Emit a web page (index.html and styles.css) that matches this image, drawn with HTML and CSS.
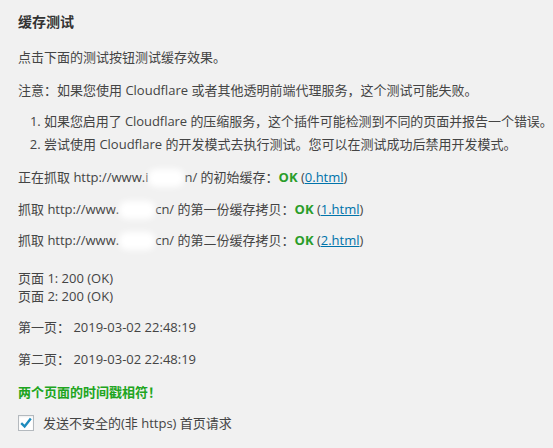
FILE: index.html
```html
<!DOCTYPE html>
<html lang="zh-CN">
<head>
<meta charset="utf-8">
<link rel="stylesheet" href="styles.css">
</head>
<body>
<div class="wrap">
  <h3 class="title">缓存测试</h3>
  <p class="l p1">点击下面的测试按钮测试缓存效果。</p>
  <p class="l p2">注意：如果您使用 Cloudflare 或者其他透明前端代理服务，这个测试可能失败。</p>
  <ol class="notes">
    <li class="l n1">如果您启用了 Cloudflare 的压缩服务，这个插件可能检测到不同的页面并报告一个错误。</li>
    <li class="l n2">尝试使用 Cloudflare 的开发模式去执行测试。您可以在测试成功后禁用开发模式。</li>
  </ol>
  <p class="l f1">正在抓取 http://www.i<span class="mask m1"></span>n/ 的初始缓存：<b class="ok">OK</b> (<a href="#">0.html</a>)</p>
  <p class="l f2">抓取 http://www.<span class="mask m2"></span>cn/ 的第一份缓存拷贝：<b class="ok">OK</b> (<a href="#">1.html</a>)</p>
  <p class="l f3">抓取 http://www.<span class="mask m2"></span>cn/ 的第二份缓存拷贝：<b class="ok">OK</b> (<a href="#">2.html</a>)</p>
  <p class="pages">页面 1: 200 (OK)<br>页面 2: 200 (OK)</p>
  <p class="l t1">第一页： <span class="ts">2019-03-02 22:48:19</span></p>
  <p class="l t2">第二页： <span class="ts">2019-03-02 22:48:19</span></p>
  <p class="l match">两个页面的时间戳相符！</p>
  <label class="l check">
    <span class="box"><svg width="14" height="14" viewBox="0 0 14 14"><path d="M2.2 7.2 L5.6 10.4 L11.8 2.6" fill="none" stroke="#1e8cbe" stroke-width="2.4"/></svg></span>
    <span>发送不安全的(非 https) 首页请求</span>
  </label>
</div>
</body>
</html>
```
FILE: styles.css
```css
html, body {
  margin: 0;
  padding: 0;
  background: #f1f1f1;
}
body {
  font-family: "Open Sans", "Noto Sans CJK SC", sans-serif;
  font-size: 13px;
  color: #444;
}
.wrap {
  padding: 11px 18px 0 18px;
}
.title {
  margin: 0;
  font-size: 14px;
  line-height: 20px;
  font-weight: bold;
  color: #333;
  font-family: "Noto Sans CJK SC", sans-serif;
}
.l {
  display: block;
  margin: 0;
  line-height: 20px;
  white-space: nowrap;
}
.p1 { margin-top: 16px; }
.p2 { margin-top: 13px; }
.notes {
  margin: 11px 0 0 0;
  padding: 0 0 0 26px;
}
.notes li { display: list-item; }
.n1 { letter-spacing: -0.06px; }
.n2 { margin-top: 3px; }
.f1 { margin-top: 13px; }
.f2 { margin-top: 12px; }
.f3 { margin-top: 11px; }
.mask {
  display: inline-block;
  height: 18px;
  vertical-align: -5px;
  background: #fff;
  border-radius: 8px;
  filter: blur(3px);
}
.m1 { width: 36px; }
.m2 { width: 36px; }
.ok { color: #2a9d2a; font-weight: bold; }
a { color: #0073aa; text-decoration: underline; }
.pages {
  margin: 19px 0 0 0;
  line-height: 18px;
}
.t1 { margin-top: 12px; }
.t2 { margin-top: 12px; }
.ts { margin-left: 0; }
.match {
  margin-top: 13px;
  color: #20a520;
  font-weight: bold;
  font-family: "Noto Sans CJK SC", sans-serif;
}
.check {
  margin-top: 11px;
  display: flex;
  align-items: center;
  gap: 9px;
}
.box {
  width: 14px;
  height: 14px;
  border: 1px solid #b4b9be;
  background: #fff;
  display: flex;
  align-items: center;
  justify-content: center;
  box-shadow: inset 0 1px 2px rgba(0,0,0,0.07);
}
```
